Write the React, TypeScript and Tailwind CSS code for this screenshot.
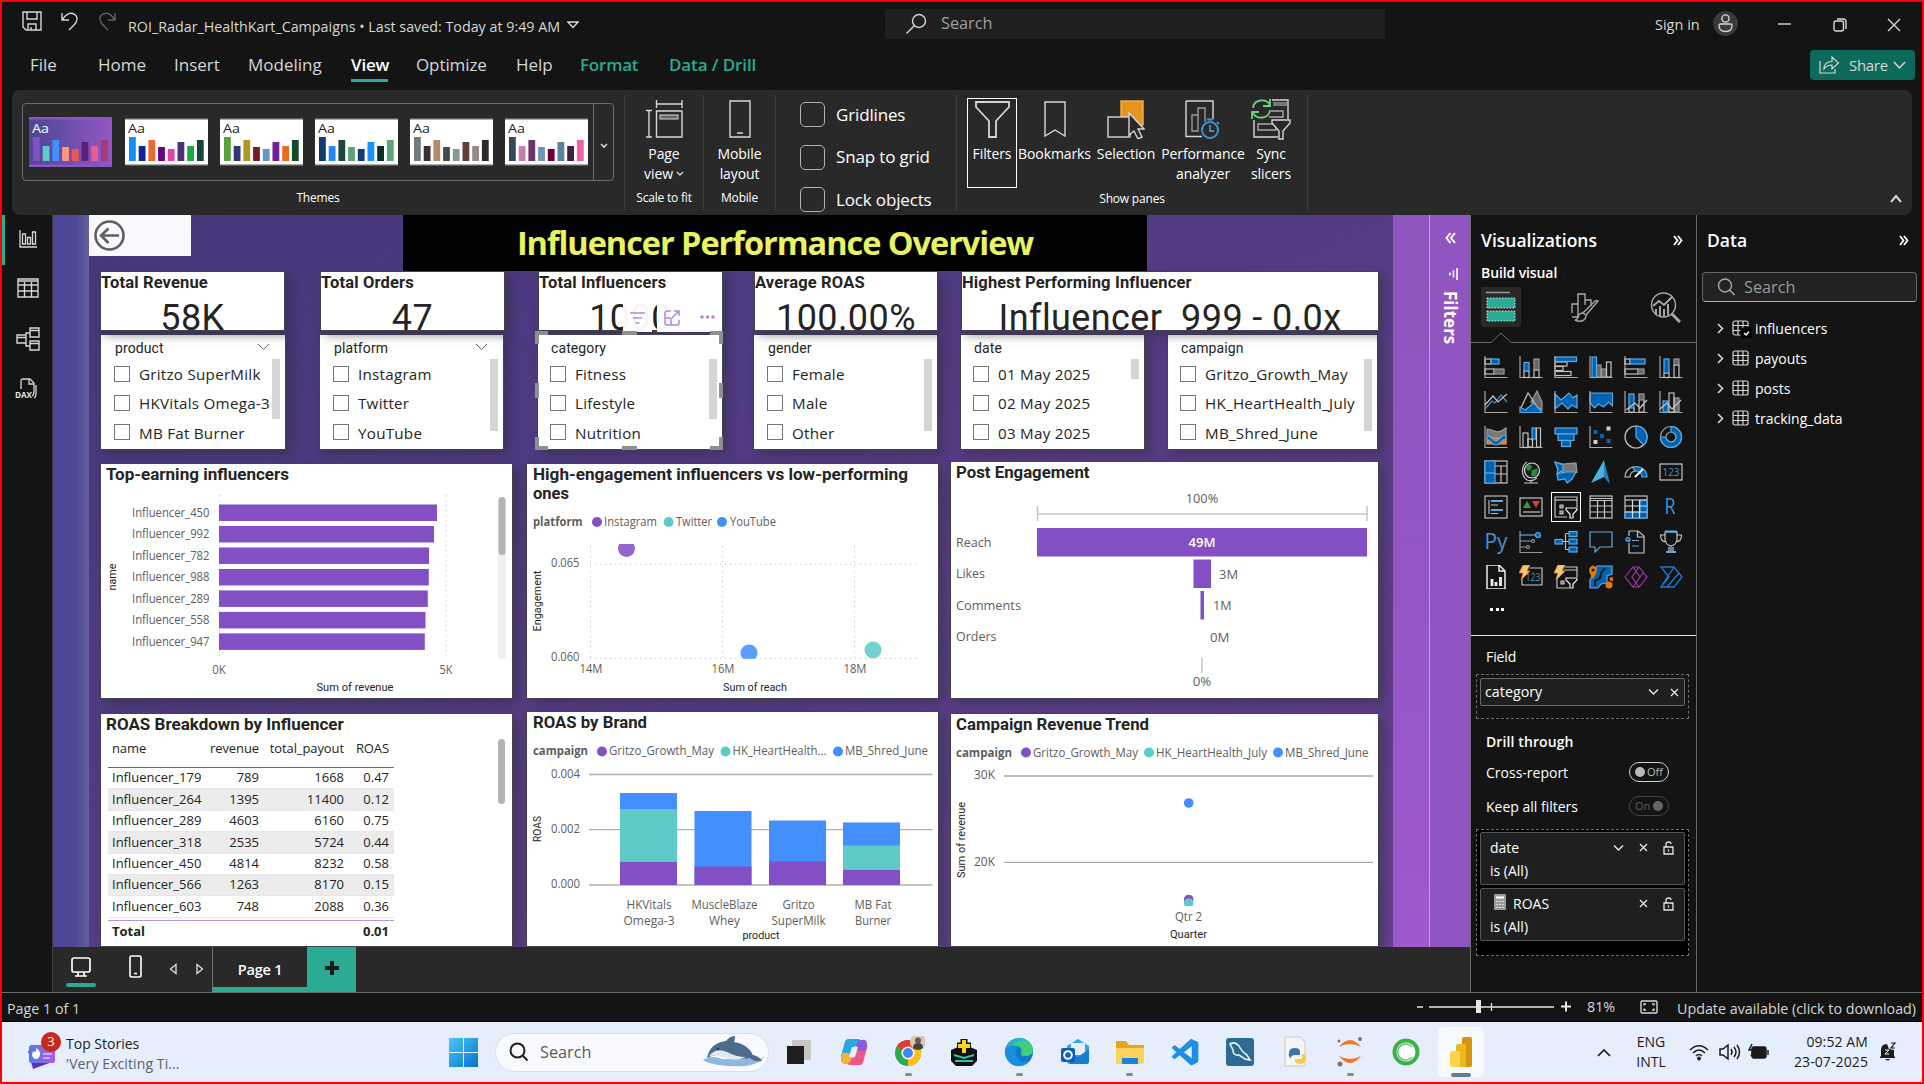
import React from "react";

const UI = "font-['Open_Sans','Noto_Sans',sans-serif]";
const DIN = "font-['Roboto','Liberation_Sans',sans-serif]";

/* ---------- svg helpers ---------- */

type TProps = {
  x: number;
  y: number;
  s?: number;
  w?: number;
  a?: "start" | "middle" | "end";
  c?: string;
  b?: number;
  din?: boolean;
  rot?: boolean;
  children: React.ReactNode;
};

function T({ x, y, s = 12, w, a = "start", c = "#605e5c", b = 400, din, rot, children }: TProps) {
  return (
    <text
      x={x}
      y={y + s * 0.33}
      fontSize={s}
      fontWeight={b}
      textAnchor={a}
      fill={c}
      stroke="none"
      textLength={w}
      lengthAdjust="spacingAndGlyphs"
      transform={rot ? `rotate(-90 ${x} ${y})` : undefined}
      className={din ? DIN : UI}
    >
      {children}
    </text>
  );
}

function Ico({ w, h, vb, children, className = "" }: { w: number; h: number; vb?: string; children: React.ReactNode; className?: string }) {
  return (
    <svg width={w} height={h} viewBox={vb ?? `0 0 ${w} ${h}`} fill="none" stroke="#d6d6d6" strokeWidth={1.4} className={"shrink-0 " + className}>
      {children}
    </svg>
  );
}

/* ---------- title bar ---------- */

function TitleBar() {
  return (
    <div className="flex h-[43px] items-center pl-[20px] text-[#d6d6d6]">
      <Ico w={20} h={20} className="-mt-1.5">
        <path d="M1 1h18v18H4l-3-3z M5 1v7h10V1 M6 19v-6h8v6 M9 19v-3" />
      </Ico>
      <Ico w={18} h={20} className="-mt-1.5 ml-[19px]">
        <path d="M1 2v7h7 M1.500 8.500C5 3 9 1 13 3c5 3 3 8 0 11l-5 5" />
      </Ico>
      <Ico w={18} h={20} className="-mt-1.5 ml-[19px] opacity-40">
        <path d="M17 2v7h-7 M16.500 8.500C13 3 9 1 5 3c-5 3-3 8 0 11l5 5" />
      </Ico>
      <span className="ml-[12px] mt-1.5 w-[439px] whitespace-nowrap text-[14.3px]">
        ROI_Radar_HealthKart_Campaigns • Last saved: Today at 9:49 AM
      </span>
      <Ico w={12} h={8} className="mt-0.5">
        <path d="M1 1h10L6 6.500z" />
      </Ico>
      <div className="ml-[306px] flex h-[30px] w-[500px] items-center rounded-[3px] bg-[#1f1f1f] pl-[20px]">
        <Ico w={22} h={22}>
          <circle cx="14" cy="8" r="6.500" />
          <path d="M9.500 12.500L1.500 20.500" />
        </Ico>
        <span className="ml-[14px] text-[16.300px] text-[#a0a0a0]">Search</span>
      </div>
      <span className="ml-[270px] mt-0.5 w-[58px] whitespace-nowrap text-[14.500px]">Sign in</span>
      <Ico w={25} h={25}>
        <circle cx="12.500" cy="12.500" r="12.500" fill="#3a3a3a" stroke="none" />
        <circle cx="12.500" cy="7.500" r="3.600" />
        <path d="M6 14.500c0-1 .5-1.500 1.500-1.500h10c1 0 1.500.5 1.500 1.500 0 4-2.500 6-6.500 6S6 18.500 6 14.500z" />
      </Ico>
      <Ico w={13} h={13} className="ml-[40px]">
        <path d="M0 7h13" />
      </Ico>
      <Ico w={14} h={14} className="ml-[42px] mt-0.5">
        <rect x="1" y="3" width="9.500" height="10" rx="2" />
        <path d="M4 1h6c2 0 3 1 3 3v7" />
      </Ico>
      <Ico w={14} h={14} className="ml-[40px] mt-0.5">
        <path d="M1 1l12 12M13 1L1 13" />
      </Ico>
    </div>
  );
}

function Menu() {
  return (
    <div className="flex h-[45px] items-start whitespace-nowrap pt-[7px] text-[17px] leading-[26px] text-[#d6d6d6]">
      <span className="ml-[28px] w-[68px]">File</span>
      <span className="w-[76px]">Home</span>
      <span className="w-[74px]">Insert</span>
      <span className="w-[103px]">Modeling</span>
      <span className="h-[30px] w-[37px] border-b-[3px] border-[#2bab94] font-semibold tracking-[-0.2px] text-white">View</span>
      <span className="ml-[28px] w-[100px] tracking-[-0.1px]">Optimize</span>
      <span className="w-[64px]">Help</span>
      <span className="w-[89px] font-semibold tracking-[-0.2px] text-[#2bab94]">Format</span>
      <span className="w-[88px] font-semibold tracking-[-0.1px] text-[#2bab94]">Data / Drill</span>
      <div className="ml-auto mr-[7px] mt-[-2px] flex h-[30px] w-[105px] items-center rounded-[4px] bg-[#0d695a] pl-[9px] text-[15px]">
        <Ico w={21} h={20}>
          <path d="M1 6v12h15v-4 M5 14c0-5 3-7.500 8-7.500V2l6.500 6-6.500 6V10c-4 0-6 1-8 4z" strokeWidth={1.2} />
        </Ico>
        <span className="ml-[9px] tracking-[-0.3px]">Share</span>
        <Ico w={13} h={9} className="ml-[5px]">
          <path d="M1 1l5.500 6L12 1" />
        </Ico>
      </div>
    </div>
  );
}

/* ---------- ribbon ---------- */

const themes: { colors: string[] }[] = [
  { colors: ["#8250c4", "#5ecbc8", "#438fff", "#ff977e", "#eb5757", "#5b2071", "#ec5a96", "#a43b76"] },
  { colors: ["#118dff", "#12239e", "#e66c37", "#6b007b", "#e044a7", "#4a3076", "#1aab40", "#15443c"] },
  { colors: ["#5aa33a", "#2f3b73", "#b09624", "#791b22", "#5e95cc", "#6c1f96", "#e66f1b", "#164a2c"] },
  { colors: ["#133a6b", "#2684ff", "#1d463f", "#5aa672", "#0f3d74", "#1c91ff", "#0c2e2a", "#5ca57b"] },
  { colors: ["#6e7a80", "#3a2f30", "#b38c6f", "#444b4f", "#8a9699", "#5f3f38", "#928c86", "#27292a"] },
  { colors: ["#36495c", "#c77ea8", "#6d346d", "#7095b5", "#6f0034", "#5d829b", "#42203d", "#ec62a4"] },
];
const barHeights = [24, 15, 21, 14, 12, 19, 15, 21];

function ThemeThumb({ i, colors }: { i: number; colors: string[] }) {
  return (
    <svg width="83" height="50" viewBox="0 0 83 50" className={i ? "shrink-0" : "mr-px shrink-0"}>
      <defs>
        <linearGradient id="thumb" x1="0" x2="1">
          <stop offset="0" stopColor="#4a4893" />
          <stop offset="1" stopColor="#9457c4" />
        </linearGradient>
      </defs>
      <rect width="83" height={i ? 48 : 50} y={i ? 1 : 0} fill={i ? "#5a5d60" : "#8a56c6"} />
      <rect width="83" height="45" y="2.500" fill={i ? "#ffffff" : "url(#thumb)"} />
      <T x={3} y={11.500} s={13} c={i ? "#1e1e1e" : "#fff"} w={17}>
        Aa
      </T>
      {colors.map((c, k) => (
        <rect key={k} x={4 + k * 9.7} width={6.800} y={44 - barHeights[k]} height={barHeights[k]} fill={c} />
      ))}
    </svg>
  );
}

function Label({ children, className = "" }: { children: React.ReactNode; className?: string }) {
  return <div className={"whitespace-nowrap text-center text-[12px] leading-[16px] tracking-[-0.2px] text-white " + className}>{children}</div>;
}

function Tool({ icon, lines, className = "" }: { icon: React.ReactNode; lines: React.ReactNode[]; className?: string }) {
  return (
    <div className={"flex shrink-0 flex-col items-center whitespace-nowrap text-[14px] leading-[20px] tracking-[-0.1px] text-white " + className}>
      <div className="mb-[5px] flex h-[40px] items-center">{icon}</div>
      {lines.map((l, i) => (
        <div key={i}>{l}</div>
      ))}
    </div>
  );
}

function Ribbon() {
  return (
    <div className="ml-[10px] flex h-[125px] w-[1900px] rounded-[8px] bg-[#292929] py-[5px]">
      <div className="w-[613px] border-r border-[#3d3d3d] pl-[10px] pt-[8px]">
        <div className="flex h-[78px] w-[592px] rounded-[4px] border border-[#6a6a6a]">
          <div className="flex w-[571px] items-center gap-[12px] border-r border-[#6a6a6a] pl-[6px]">
            {themes.map((t, i) => (
              <ThemeThumb key={i} i={i} colors={t.colors} />
            ))}
          </div>
          <div className="flex flex-1 items-center justify-center pt-2">
            <Ico w={8} h={6}>
              <path d="M1 1l3 3 3-3" strokeWidth={1.6} />
            </Ico>
          </div>
        </div>
        <Label className="mt-[9px] pr-[10px]">Themes</Label>
      </div>
      <div className="w-[79px] border-r border-[#3d3d3d] pt-[4px]">
        <Tool
          icon={
            <Ico w={37} h={38}>
              <path d="M10 4h26M10.500 0v8M36 0v8M3 11v26M0 10.500h6M0 37h6M10.500 11H36v26H10.500z" />
              <rect x="14" y="15" width="18" height="4" fill="#666" strokeWidth="1" />
            </Ico>
          }
          lines={[
            "Page",
            <span className="flex items-center gap-[3px]">
              view
              <Ico w={8} h={6}>
                <path d="M1 1l3 3 3-3" />
              </Ico>
            </span>,
          ]}
        />
        <Label className="mt-[6px]">Scale to fit</Label>
      </div>
      <div className="w-[72px] border-r border-[#3d3d3d] pt-[4px]">
        <Tool
          icon={
            <Ico w={22} h={38}>
              <path d="M1 1h20v36H1z M8 33h6" />
            </Ico>
          }
          lines={["Mobile", "layout"]}
        />
        <Label className="mt-[6px]">Mobile</Label>
      </div>
      <div className="flex w-[181px] flex-col gap-[17.500px] border-r border-[#3d3d3d] pl-[24px] pt-[7px]">
        {["Gridlines", "Snap to grid", "Lock objects"].map((t) => (
          <div key={t} className="flex h-[25px] shrink-0 items-center gap-[11px] whitespace-nowrap text-[17px] tracking-[-0.15px] text-white">
            <div className="h-[25px] w-[25px] rounded-[5px] border border-[#b0b0b0]" />
            {t}
          </div>
        ))}
      </div>
      <div className="w-[351px] border-r border-[#3d3d3d] pt-[3px]">
        <div className="flex h-[92px]">
          <Tool
            className="ml-[10px] h-[90px] w-[50px] border border-white"
            icon={
              <Ico w={35} h={37}>
                <path d="M1 1h33v5L21 20v16h-7V20L1 6z" strokeWidth={1.8} />
              </Ico>
            }
            lines={["Filters"]}
          />
          <Tool
            className="w-[75px] pt-px"
            icon={
              <Ico w={22} h={37}>
                <path d="M1 1h20v34l-10-6-10 6z" />
              </Ico>
            }
            lines={["Bookmarks"]}
          />
          <Tool
            className="w-[68px] pt-px"
            icon={
              <Ico w={38} h={39}>
                <rect x="14" y="1" width="22" height="24" fill="#e8951f" stroke="#f5b04a" />
                <rect x="1" y="17" width="22" height="20" fill="#292929" />
                <path d="M22 13v22l5-4 4 8 4-2-4-8h6z" fill="#292929" />
              </Ico>
            }
            lines={["Selection"]}
          />
          <Tool
            className="w-[86px] pt-px"
            icon={
              <Ico w={36} h={39}>
                <path d="M1 1h27v18M17 36.500H1V1" />
                <path d="M7 31V15h6v16z M13 31V8h7v14" stroke="#9a9a9a" />
                <circle cx="25" cy="30" r="8" stroke="#3f94d2" strokeWidth="2" />
                <path d="M25 25v6h4 M22 19.500h6 M32 22l2 2" stroke="#3f94d2" strokeWidth="1.800" />
              </Ico>
            }
            lines={["Performance", "analyzer"]}
          />
          <Tool
            className="w-[50px] pt-px"
            icon={
              <Ico w={40} h={41}>
                <path d="M21 1h16v19 M3 21v17h24" />
                <path d="M22 3h14v4H22z" fill="#777" stroke="none" />
                <path d="M20 12h12v6H18 M7 25h18v6H7z" stroke="#a8a8a8" />
                <path d="M21 21h18v3l-7 8v8h-4v-8l-7-8z" fill="#292929" />
                <path d="M2 9c1-9 13-10 17-3M19 0v7h-7M19 11c-1 9-13 10-17 3M1 20v-7h7" stroke="#6fcf7c" strokeWidth="1.800" />
              </Ico>
            }
            lines={["Sync", "slicers"]}
          />
        </div>
        <Label className="mt-px">Show panes</Label>
      </div>
      <div className="flex flex-1 items-end justify-end pb-[7px] pr-[10px]">
        <Ico w={12} h={9}>
          <path d="M1 8l5-6 5 6" strokeWidth={2} />
        </Ico>
      </div>
    </div>
  );
}

/* ---------- left nav ---------- */

function LeftNav() {
  return (
    <div className="flex w-[51px] flex-col border-r border-[#3f3f3f] bg-[#141414]">
      <div className="flex h-[50px] items-center border-l-[3px] border-[#2bab94] pb-[2px] pl-[14px]">
        <Ico w={18} h={18}>
          <path d="M1 0v17h17M3.500 14V4h3v10zM8.500 14V7.500h3V14zM13.500 14V2h3v12z" strokeWidth={1.300} />
        </Ico>
      </div>
      <Ico w={22} h={20} className="ml-[15px] mt-[13px]">
        <path d="M1 1h20v18H1zM1 3h20M1 7h20M1 13h20M7.500 4v15M14.500 4v15" />
      </Ico>
      <Ico w={24} h={24} className="ml-[14px] mt-[29px]">
        <path d="M1 8h9v8H1zM1 10.500h9M14 1h9v9h-9zM14 3.500h9M14 14h9v9h-9zM14 16.500h9M10 10V6h4M10 14v5h4" />
      </Ico>
      <svg width="24" height="24" viewBox="0 0 24 24" className="ml-[13px] mt-[27px]" fill="none" stroke="#d6d6d6" strokeWidth="1.300">
        <path d="M6 11V3q0-2 2-2h7l4 4v8q0 4-2 5M14 1v5h5M21 7v8q0 4-2 5" />
        <T x={0} y={17} s={8.500} w={17} c="#e6e6e6" b={700}>
          DAX
        </T>
      </svg>
    </div>
  );
}

/* ---------- report canvas ---------- */

const cardCls = "shrink-0 border border-[#45424f] bg-white shadow-[5px_5px_9px_rgba(45,45,50,0.45)]";

function Kpi({ title, value, className }: { title: string; value: string; className: string }) {
  return (
    <div className={`${cardCls} ${DIN} h-[60px] overflow-hidden text-[#252423] ${className}`}>
      <div className="whitespace-nowrap text-[16.500px] font-bold leading-[21px] tracking-[0.15px]">{title}</div>
      <div className="mt-[7px] whitespace-pre text-center text-[36px] leading-[36px] tracking-[0.4px]">{value}</div>
    </div>
  );
}

function Slicer({ title, items, className, thumb, chevron, left = "pl-[12px]" }: { title: string; items: string[]; className: string; thumb: string; chevron?: boolean; left?: string }) {
  return (
    <div className={`${cardCls} flex h-[116px] text-[#252423] ${left} ${className}`}>
      <div className="min-w-0 flex-1">
        <div className={`${DIN} flex h-[25px] items-center justify-between pt-[2px] pr-[1px] text-[14px] tracking-[0.1px]`}>
          <span className="ml-[1px]">{title}</span>
          {chevron && (
            <svg width="13" height="8" viewBox="0 0 13 8" fill="none" stroke="#666" className="-mt-[4px] mr-[1px]">
              <path d="M1 1l5.500 5.500L12 1" />
            </svg>
          )}
        </div>
        {items.map((t) => (
          <div key={t} className="flex h-[29.200px] items-center whitespace-nowrap text-[15.200px] tracking-[0.25px]">
            <div className="-mt-[2px] h-[16px] w-[16px] shrink-0 border border-[#777]" />
            <span className="ml-[9px]">{t}</span>
          </div>
        ))}
      </div>
      <div className={`mt-[24px] w-[8px] shrink-0 bg-[#d5d5d5] ${thumb}`} />
    </div>
  );
}

function SelectionFrame() {
  return (
    <svg width="188" height="119" viewBox="0 0 188 119" className="absolute -left-[2px] -top-[3px] z-30" fill="none" stroke="#8f8f8f" strokeWidth="4">
      <path d="M2 13V2h11M175 2h11v11M186 106v11h-11M13 117H2v-11" />
      <path d="M87 2h15M87 117h15M2 52v15M186 52v15" />
    </svg>
  );
}

function HoverTools() {
  return (
    <div className="absolute -top-[31px] right-[1px] z-30 flex h-[29px] w-[99px]">
      <svg width="99" height="29" viewBox="0 0 99 29" fill="none" stroke="#b08ad9" strokeWidth="1.500">
        <path d="M0 0h29v29H0zM34 0h65v29H34z" fill="#fff" fillOpacity=".96" stroke="none" />
        <path d="M7 10h15M10 15h9M12.500 20h4" />
        <path d="M48 8h-4q-2 0-2 2v10q0 2 2 2h10q2 0 2-2v-3M42 15h5q1 0 1 1v6M49 15l7-7M51 8h5v5" />
        <g fill="#b08ad9" stroke="none">
          <circle cx="79" cy="14" r="1.800" />
          <circle cx="84.500" cy="14" r="1.800" />
          <circle cx="90" cy="14" r="1.800" />
        </g>
      </svg>
    </div>
  );
}

function Dot({ x, y, c, r = 5 }: { x: number; y: number; c: string; r?: number }) {
  return <circle cx={x} cy={y} r={r} fill={c} />;
}

const P = "#8250c4";
const TE = "#5ecbc8";
const BL = "#438fff";
const INK = "#252423";

function TopEarning() {
  const rows: [string, number][] = [
    ["Influencer_450", 437],
    ["Influencer_992", 434],
    ["Influencer_782", 429],
    ["Influencer_988", 428.800],
    ["Influencer_289", 427.800],
    ["Influencer_558", 425.500],
    ["Influencer_947", 424.800],
  ];
  return (
    <svg width="411" height="234" viewBox="101 464 411 234">
      <T x={106} y={474.500} s={17} w={183} b={700} c={INK} din>Top-earning influencers</T>
      <path d="M219.500 495V660M446 495V660" stroke="#d0d0d0" strokeDasharray="1.500 3.500" />
      {rows.map(([n, e], i) => (
        <g key={n}>
          <T x={209.500} y={513 + i * 21.480} s={11.800} w={77.500} a="end">{n}</T>
          <rect x={219} y={504.500 + i * 21.480} width={e - 219} height={16.500} fill={P} />
        </g>
      ))}
      <T x={219} y={670} s={12} a="middle" w={13.500}>0K</T>
      <T x={446} y={670} s={12} a="middle" w={13}>5K</T>
      <T x={355} y={687.500} s={11} w={77} a="middle" c={INK} din>Sum of revenue</T>
      <T x={112} y={577} s={11} w={27} a="middle" c={INK} din rot>name</T>
      <rect x="498" y="497" width="8" height="162" rx="4" fill="#efefef" />
      <rect x="498.500" y="497" width="7" height="58" rx="3.500" fill="#b3b3b3" />
    </svg>
  );
}

function Scatter() {
  return (
    <svg width="411" height="234" viewBox="527 464 411 234">
      <T x={533} y={474.500} s={17} w={375} b={700} c={INK} din>High-engagement influencers vs low-performing</T>
      <T x={533} y={493.500} s={17} w={36} b={700} c={INK} din>ones</T>
      <T x={533} y={522.500} s={12} w={49.500} b={700}>platform</T>
      <Dot x={597} y={522} c={P} />
      <T x={604} y={522.500} s={12} w={53}>Instagram</T>
      <Dot x={668.600} y={522} c={TE} />
      <T x={676} y={522.500} s={12} w={36}>Twitter</T>
      <Dot x={722} y={522} c={BL} />
      <T x={730} y={522.500} s={12} w={46}>YouTube</T>
      <path d="M590.500 546V658M722.500 546V658M854.500 546V658M590 564.300H917M590 658.500H917" stroke="#c4c4c4" strokeDasharray="1.200 3.800" />
      <clipPath id="plot">
        <rect x="585" y="544" width="335" height="114.800" />
      </clipPath>
      <g clipPath="url(#plot)" opacity=".87">
        <Dot x={626.500} y={548.500} r={8.500} c={P} />
        <Dot x={749} y={653} r={8.500} c={BL} />
        <Dot x={873} y={650} r={8.500} c={TE} />
      </g>
      <T x={551} y={563.500} s={12} w={28.500}>0.065</T>
      <T x={551} y={657.500} s={12} w={28.500}>0.060</T>
      <T x={591} y={669.500} s={12} w={23} a="middle">14M</T>
      <T x={723} y={669.500} s={12} w={23} a="middle">16M</T>
      <T x={855} y={669.500} s={12} w={23} a="middle">18M</T>
      <T x={755} y={687.500} s={11} w={64} a="middle" c={INK} din>Sum of reach</T>
      <T x={537.500} y={601} s={11} w={61} a="middle" c={INK} din rot>Engagement</T>
    </svg>
  );
}

function Funnel() {
  return (
    <svg width="428" height="236" viewBox="951 462 428 236">
      <T x={956} y={472.500} s={17} w={133.500} b={700} c={INK} din>Post Engagement</T>
      <T x={1202} y={498.500} s={13} w={32.500} a="middle">100%</T>
      <path d="M1037 514H1367M1037.500 506v15M1367 506v15M1202 658v15" stroke="#c8c4c6" strokeWidth="1.500" />
      <g fill={P}>
        <rect x="1037" y="528" width="330" height="28.500" />
        <rect x="1193.500" y="559.500" width="17.500" height="28.500" />
        <rect x="1200.500" y="591" width="3.500" height="28.500" />
      </g>
      <T x={956} y={542.500} s={13} w={35.500}>Reach</T>
      <T x={956} y={573.500} s={13} w={29}>Likes</T>
      <T x={956} y={605.500} s={13} w={65}>Comments</T>
      <T x={956} y={636.500} s={13} w={40.500}>Orders</T>
      <T x={1202} y={543} s={13} w={27} a="middle" c="#fff" b={600}>49M</T>
      <T x={1219} y={574.500} s={13} w={19}>3M</T>
      <T x={1213} y={606} s={13} w={18.500}>1M</T>
      <T x={1210} y={638} s={13} w={19.500}>0M</T>
      <T x={1202} y={682} s={13} w={18.500} a="middle">0%</T>
    </svg>
  );
}

function RoasByBrand() {
  const bars: { x: number; seg: [number, string][] }[] = [
    { x: 620, seg: [[793, BL], [809, TE], [862, P]] },
    { x: 694.500, seg: [[811, BL], [866.500, P]] },
    { x: 769, seg: [[820.500, BL], [861.500, P]] },
    { x: 843, seg: [[822.500, BL], [845.500, TE], [870, P]] },
  ];
  const cats: [number, string, number, string, number][] = [
    [649, "HKVitals", 45, "Omega-3", 51],
    [724.500, "MuscleBlaze", 66, "Whey", 31],
    [798.500, "Gritzo", 32, "SuperMilk", 54],
    [873, "MB Fat", 37, "Burner", 36],
  ];
  return (
    <svg width="411" height="234" viewBox="527 712 411 234">
      <T x={533} y={722.500} s={17} w={114} b={700} c={INK} din>ROAS by Brand</T>
      <T x={533} y={751.500} s={12} w={55} b={700}>campaign</T>
      <Dot x={602} y={751.500} c={P} />
      <T x={609} y={751.500} s={12} w={105}>Gritzo_Growth_May</T>
      <Dot x={725.500} y={751.500} c={TE} />
      <T x={732.500} y={751.500} s={12} w={94}>HK_HeartHealth...</T>
      <Dot x={838} y={751.500} c={BL} />
      <T x={845} y={751.500} s={12} w={83}>MB_Shred_June</T>
      <path d="M589 774.500H932.500M589 829.700H932.500M589 885H932.500" stroke="#b0b0b0" strokeWidth="1.300" />
      <T x={551} y={774.500} s={12} w={29}>0.004</T>
      <T x={551} y={829.500} s={12} w={29}>0.002</T>
      <T x={551} y={884.500} s={12} w={29}>0.000</T>
      {bars.map((b) =>
        b.seg.map(([y, c]) => <rect key={b.x + c} x={b.x} y={y} width={57} height={885 - y} fill={c} />)
      )}
      {cats.map(([x, a, wa, b, wb]) => (
        <g key={a}>
          <T x={x} y={905} s={12} a="middle" w={wa}>{a}</T>
          <T x={x} y={921} s={12} a="middle" w={wb}>{b}</T>
        </g>
      ))}
      <T x={761} y={935.500} s={11} w={37} a="middle" c={INK} din>product</T>
      <T x={537.500} y={829} s={11} w={26} a="middle" c={INK} din rot>ROAS</T>
    </svg>
  );
}

function Trend() {
  return (
    <svg width="427" height="232" viewBox="951 714 427 232">
      <T x={956} y={724.500} s={17} w={193} b={700} c={INK} din>Campaign Revenue Trend</T>
      <T x={956} y={753} s={12} w={56} b={700}>campaign</T>
      <Dot x={1026} y={752.500} c={P} />
      <T x={1033} y={753} s={12} w={105}>Gritzo_Growth_May</T>
      <Dot x={1149} y={752.500} c={TE} />
      <T x={1156} y={753} s={12} w={111}>HK_HeartHealth_July</T>
      <Dot x={1278} y={752.500} c={BL} />
      <T x={1285} y={753} s={12} w={83.500}>MB_Shred_June</T>
      <path d="M1004 776H1373M1004 862.300H1373" stroke="#aaa" strokeWidth="1.300" />
      <T x={974} y={775.500} s={12} w={21}>30K</T>
      <T x={974} y={862.500} s={12} w={21}>20K</T>
      <Dot x={1188.700} y={803} r={4.800} c={BL} />
      <clipPath id="trend">
        <rect x="1180" y="880" width="20" height="26" />
      </clipPath>
      <g clipPath="url(#trend)">
        <Dot x={1188.700} y={899.500} r={4.800} c={P} />
        <Dot x={1188.700} y={903} r={4.800} c={TE} />
      </g>
      <T x={1188.500} y={917.500} s={12} w={27} a="middle">Qtr 2</T>
      <T x={1188.500} y={934.500} s={11} w={37} a="middle" c={INK} din>Quarter</T>
      <T x={961.500} y={840} s={11} w={76} a="middle" c={INK} din rot>Sum of revenue</T>
    </svg>
  );
}

const table: string[][] = [
  ["Influencer_179", "789", "1668", "0.47"],
  ["Influencer_264", "1395", "11400", "0.12"],
  ["Influencer_289", "4603", "6160", "0.75"],
  ["Influencer_318", "2535", "5724", "0.44"],
  ["Influencer_450", "4814", "8232", "0.58"],
  ["Influencer_566", "1263", "8170", "0.15"],
  ["Influencer_603", "748", "2088", "0.36"],
];
const cols = "grid grid-cols-[97px_50px_85px_45px] items-center pl-[4px] text-right";

function RoasTable() {
  return (
    <div className="flex h-full pl-[5px] text-[13px] text-[#252423]">
      <div className="w-[288px] pl-[2px]">
        <div className={`${DIN} -ml-[2px] h-[22px] whitespace-nowrap text-[17px] font-bold leading-[21px]`}>
          ROAS Breakdown by Influencer
        </div>
        <div className={`${cols} h-[32px] border-b border-[#8250c4] pb-[5px] tracking-[-0.1px]`}>
          <span className="text-left">name</span>
          <span>revenue</span>
          <span>total_payout</span>
          <span>ROAS</span>
        </div>
        {table.map((r, i) => (
          <div key={r[0]} className={`${cols} h-[21.400px] border-b border-[#e6e6e6] ${i % 2 ? "bg-[#ececec]" : ""}`}>
            {r.map((c, k) => (
              <span key={k} className={k === 0 ? "text-left" : ""}>
                {c}
              </span>
            ))}
          </div>
        ))}
        <div className={`${cols} mt-[2px] h-[24px] border-t border-[#b795e0] font-bold`}>
          <span className="text-left">Total</span>
          <span />
          <span />
          <span>0.01</span>
        </div>
      </div>
      <div className="ml-[104px] mt-[25px] h-[65px] w-[7px] rounded-full bg-[#b3b3b3]" />
    </div>
  );
}

function Report() {
  return (
    <div className="h-[732px] w-[1304px] overflow-hidden bg-linear-to-br from-[#45377a] to-[#64408f]">
      <div className="flex h-[56px]">
        <div className="h-[41px] w-[102px] bg-[#f9f8fc] pl-[5px] pt-[5px]">
          <svg width="31" height="31" viewBox="0 0 31 31" fill="none" stroke="#5f5f5f" strokeWidth="2.600">
            <circle cx="15.500" cy="15.500" r="14" />
            <path d="M25 15.500H8M14.500 8.500l-7.500 7 7.500 7.500" />
          </svg>
        </div>
        <div className="ml-[212px] flex w-[744px] items-center justify-center whitespace-nowrap bg-[#020203] text-[32.500px] font-bold tracking-[-1.040px] text-[#e8f363]">
          Influencer Performance Overview
        </div>
      </div>
      <div className="relative z-10 flex">
        <Kpi className="ml-[11px] w-[185px]" title="Total Revenue" value="58K" />
        <Kpi className="ml-[35px] w-[185px]" title="Total Orders" value="47" />
        <Kpi className="ml-[33px] w-[185px]" title="Total Influencers" value="1000" />
        <Kpi className="ml-[31px] w-[184px]" title="Average ROAS" value="100.00%" />
        <Kpi className="ml-[23px] w-[418px]" title="Highest Performing Influencer" value="Influencer  999 - 0.0x" />
      </div>
      <div className="mt-[3px] flex">
        <Slicer className="ml-[11px] w-[186px] pr-[5px]" left="pl-[13px]" title="product" chevron thumb="h-[60px]" items={["Gritzo SuperMilk", "HKVitals Omega-3", "MB Fat Burner"]} />
        <Slicer className="ml-[33px] w-[185px] pr-[5px]" left="pl-[13px]" title="platform" chevron thumb="h-[72px]" items={["Instagram", "Twitter", "YouTube"]} />
        <div className="relative z-20 ml-[33px]">
          <Slicer className="w-[186px] pr-[5px]" title="category" thumb="h-[60px]" items={["Fitness", "Lifestyle", "Nutrition"]} />
          <HoverTools />
          <SelectionFrame />
        </div>
        <Slicer className="ml-[30px] w-[185px] pr-[5px]" left="pl-[13px]" title="gender" thumb="h-[72px]" items={["Female", "Male", "Other"]} />
        <Slicer className="ml-[22px] w-[185px] pr-[5px]" title="date" thumb="h-[20px]" items={["01 May 2025", "02 May 2025", "03 May 2025"]} />
        <Slicer className="ml-[22px] w-[211px] pr-[5px]" title="campaign" thumb="h-[72px]" items={["Gritzo_Growth_May", "HK_HeartHealth_July", "MB_Shred_June"]} />
      </div>
      <div className="mt-[13px] flex items-end">
        <div className={`${cardCls} ml-[11px] h-[236px] w-[413px]`}>
          <TopEarning />
        </div>
        <div className={`${cardCls} ml-[13px] h-[236px] w-[413px]`}>
          <Scatter />
        </div>
        <div className={`${cardCls} -mt-[2px] ml-[11px] h-[238px] w-[429px] overflow-hidden`}>
          <Funnel />
        </div>
      </div>
      <div className="mt-[14px] flex items-end">
        <div className={`${cardCls} ml-[11px] h-[234px] w-[413px]`}>
          <RoasTable />
        </div>
        <div className={`${cardCls} -mt-[2px] ml-[13px] h-[236px] w-[413px]`}>
          <RoasByBrand />
        </div>
        <div className={`${cardCls} ml-[11px] h-[234px] w-[429px]`}>
          <Trend />
        </div>
      </div>
    </div>
  );
}

function PageTabs() {
  return (
    <div className="flex h-[45px] items-center bg-[#292929]">
      <div className="ml-[13px] flex h-full w-[30px] flex-col items-center pt-[10px]">
        <Ico w={20} h={20}>
          <path d="M3 1h14q2 0 2 2v10q0 2-2 2H3q-2 0-2-2V3q0-2 2-2zM7 15.500v3M13 15.500v3M4 19h12" stroke="#fff" strokeWidth={1.700} />
        </Ico>
        <div className="mt-[6px] h-[4px] w-[30px] rounded-full bg-[#2bab94]" />
      </div>
      <Ico w={13} h={23} className="-mt-[6px] ml-[33px]">
        <path d="M2.500 1h8q1.500 0 1.500 1.500v18q0 1.500-1.500 1.500h-8Q1 22 1 20.500v-18Q1 1 2.500 1zM5 18.500h3" stroke="#fff" strokeWidth={1.600} />
      </Ico>
      <Ico w={8} h={12} className="-mt-[2px] ml-[27px]">
        <path d="M7 1.500v9L1.500 6z" />
      </Ico>
      <Ico w={8} h={12} className="-mt-[2px] ml-[19px]">
        <path d="M1 1.500v9L6.500 6z" />
      </Ico>
      <div className="ml-[8px] flex h-full w-[95px] items-center justify-center border-b-[5px] border-l border-b-[#2bab94] border-l-[#777] pt-[6px] text-[14.500px] font-semibold tracking-[-0.2px] text-white">
        Page 1
      </div>
      <div className="flex h-full w-[49px] items-center justify-center bg-[#2bab94] pb-[4px]">
        <svg width="14" height="14" viewBox="0 0 14 14" stroke="#1c1c1c" strokeWidth="4">
          <path d="M7 0v14M0 7h14" />
        </svg>
      </div>
    </div>
  );
}

function FiltersRail() {
  return (
    <div className="flex h-[732px] w-[41px] flex-col items-center border-l border-[#b9a9cb] bg-[#9155c1] pt-[17px] text-white">
      <svg width="11" height="12" viewBox="0 0 11 12" fill="none" stroke="#fff" strokeWidth="2">
        <path d="M5.500 1L1.500 6l4 5M10 1L6 6l4 5" />
      </svg>
      <svg width="10" height="12" viewBox="0 0 10 12" stroke="#fff" strokeWidth="1.600" className="ml-[6px] mt-[24px]">
        <path d="M9 0v12M5.500 2.500v7M2 4.500v3" />
      </svg>
      <span className="mt-[11px] text-[17px] font-bold leading-[20px] [writing-mode:vertical-rl]">Filters</span>
    </div>
  );
}

/* ---------- visualizations pane ---------- */

const bf = { fill: "#0063b1", stroke: "#5fa8e0" };
const gf = { fill: "#666", stroke: "#9a9a9a" };
const Axis = () => <path d="M1 1v21.500h22.500" stroke="#a6a6a6" />;

const vizIcons: React.ReactNode[] = [
  <><Axis /><rect x="1" y="4" width="6" height="5" /><rect x="7" y="4" width="8" height="5" {...bf} /><rect x="1" y="14" width="9" height="5" /><rect x="10" y="14" width="10" height="5" {...gf} /></>,
  <><Axis /><rect x="5" y="16" width="5" height="6.500" /><rect x="5" y="7.500" width="5" height="8.500" {...bf} /><rect x="15" y="15" width="5" height="7.500" /><rect x="15" y="4" width="5" height="11" {...gf} /></>,
  <><rect x="1" y="7" width="12" height="4" /><rect x="1" y="11.500" width="8" height="4" /><rect x="1" y="16.500" width="16" height="4" /><rect x="1" y="2" width="21.500" height="4.500" {...bf} /><Axis /></>,
  <><rect x="7" y="10" width="5" height="12" {...gf} /><rect x="12.500" y="14" width="5" height="8" {...gf} /><rect x="17.500" y="7" width="4.500" height="15" /><rect x="3" y="2" width="4.500" height="20.500" {...bf} /><Axis /></>,
  <><Axis /><rect x="1" y="4" width="5" height="5" /><rect x="6" y="4" width="15" height="5" {...bf} /><rect x="1" y="14" width="13" height="5" /><rect x="14" y="14" width="6" height="5" {...gf} /></>,
  <><Axis /><rect x="5" y="18" width="5" height="4.500" /><rect x="5" y="4" width="5" height="14" {...bf} /><rect x="15" y="10" width="5" height="12.500" /><rect x="15" y="4" width="5" height="6" {...gf} /></>,

  <><Axis /><path d="M1 19l7-8 3 2 6-8 6 7" stroke="#3f94d2" /><path d="M1 15l8-9 5 6 9-8" /></>,
  <><path d="M12 12l6-11 5 11v8z" {...gf} /><path d="M1 20L9 3l8 12" /><path d="M1 22.500V17l5 3 9-7 8 9.500z" {...bf} /></>,
  <><path d="M1 4l6 6 8-7 4 5 4-3v13l-5-3-4 4-6-6-7 6z" {...bf} /><Axis /></>,
  <><path d="M1 3h22.500v13l-4-4-5 5-5-3-4 4-4.500-5z" {...bf} /><Axis /></>,
  <><Axis /><rect x="5" y="4" width="5" height="14" {...bf} /><rect x="15" y="4" width="5" height="6" {...gf} /><path d="M5 18v4h5v-4M15 10v12h5V10M2 20l9-7 5 5 7-8" /></>,
  <><Axis /><rect x="4" y="11" width="5" height="11" {...bf} /><rect x="15" y="8" width="5" height="14" {...gf} /><rect x="10" y="3" width="5" height="19" /><path d="M1 19l7-6 5 6 9-9" /></>,

  <><path d="M3 4c8 0 7 7 19-1v8c-8 3-10 5-19-1z" fill="#777" stroke="#9a9a9a" /><path d="M3 13h19v6H3z" fill="#e8760a" stroke="#f2a04c" /><path d="M3 11c6 0 5 5 9 5s4-6 10-6v4c-5 0-5 6-10 6s-5-6-9-5z" {...bf} /><Axis /></>,
  <><Axis /><rect x="4" y="8" width="5" height="14.500" /><rect x="9" y="14" width="4.500" height="8" /><rect x="13" y="3" width="4" height="11" {...bf} /><path d="M13.500 14v8M17.500 3h4v19h-4z" /></>,
  <><rect x="1" y="3" width="22" height="6" {...bf} /><rect x="4" y="9" width="16" height="6.500" {...bf} /><rect x="7.500" y="15.500" width="9" height="6" {...bf} /></>,
  <><Axis /><g stroke="none"><rect x="4.500" y="5" width="4" height="4" fill="#0063b1" /><rect x="17.500" y="1.500" width="4" height="4" fill="#ccc" /><rect x="11" y="9" width="4" height="4" fill="#0063b1" /><rect x="17.500" y="14" width="4" height="4" fill="#0063b1" /><rect x="4.500" y="15" width="4" height="4" fill="#ccc" /></g></>,
  <><circle cx="12" cy="12" r="11" /><path d="M12 1a11 11 0 0 1 7.500 19L12 12z" {...bf} /></>,
  <><circle cx="12" cy="12" r="10.500" stroke="#9a9a9a" /><circle cx="12" cy="12" r="5" stroke="#9a9a9a" /><path d="M12 1.500A10.500 10.500 0 1 1 1.500 12H7a5 5 0 1 0 5-5z" {...bf} /></>,

  <><rect x="1" y="1" width="22" height="22" /><path d="M1 1h10v22H1z" {...bf} /><path d="M1 13h10" stroke="#5fa8e0" /><path d="M11 6h12M17 6v17M11 14h12" /></>,
  <><circle cx="13" cy="10.500" r="7.500" fill="#1a1a1a" stroke="#ddd" /><path d="M8 6c3-2 5 0 4 2s-2 3-4 1zM13 11l5-2-1 6-4 1z" fill="#2c8c3c" stroke="#2c8c3c" /><path d="M8 2C2 6 2 16 8 20q5 2 10-2M12 21v2M5 23h14" /></>,
  <><path d="M1 2l8 2 13-1 1 9-7 3-7-2-5-3z" fill="#777" stroke="#9a9a9a" /><path d="M1 2l8 3v5l-6 4 1-5z" {...bf} /><path d="M12 12l10 0-4 7-5 4-2-4-7 1-1-6z" {...bf} /></>,
  <><path d="M15 0L2 23l13-6z" fill="#4ab3dd" stroke="none" /><path d="M15 0l6 24-6-7z" fill="#2482c4" stroke="none" /></>,
  <><path d="M1 17a11 10 0 0 1 8-10l2 4a6 6 0 0 0-5 6z" /><path d="M9 7a11 10 0 0 1 14 10h-5a6 6 0 0 0-7-6z" {...bf} /><path d="M11 17l8-8" stroke="#eee" strokeWidth="2" /></>,
  <><rect x="1" y="4" width="22" height="16" /><T x={12} y={12} s={11} w={17} a="middle" c="#3f94d2">123</T></>,

  <><rect x="1" y="1" width="22" height="22" stroke="#bbb" /><path d="M5 5v14" stroke="#bbb" /><path d="M7 6h12M7 15h12" stroke="#5fa8e0" strokeWidth="1.800" /><path d="M7 10h7M7 18.500h7" /></>,
  <><rect x="1" y="3" width="22" height="18" /><path d="M4 13l4-7 4 7z" fill="#3a9b46" stroke="none" /><path d="M13 6h8l-4 7z" fill="#d93a3a" stroke="none" /><path d="M4 17h17" /></>,
  <><path d="M13 22H1V2h22v10" /><path d="M1 5h22" /><path d="M6 10h3v3H6zM6 16h3v3H6z" fill="#777" /><path d="M12 13h11v2l-4 4v4h-3v-4l-4-4z" stroke="#eee" /></>,
  <><rect x="1" y="1" width="22" height="22" /><path d="M1 3.500h22M1 5.500h22M1 11h22M1 17h22M8.500 5v18M15.500 5v18" /></>,
  <><rect x="1" y="1" width="22" height="22" /><path d="M16 5h7v18H1v-6h15z" {...bf} /><path d="M1 5h22M1 11h22M1 17h22M8.500 5v18M15.500 5v18" stroke="#cfe0ee" /></>,
  <T x={11} y={12} s={22} w={11} a="middle" c="#3f94d2">R</T>,

  <T x={12} y={11.500} s={22} w={23} a="middle" c="#3f94d2">Py</T>,
  <><path d="M1 1v21.500h22.500" stroke="#999" /><path d="M1 5h16" stroke="#5fa8e0" /><circle cx="19" cy="5" r="2.500" {...bf} /><path d="M1 11h11M1 17h6" stroke="#999" /><circle cx="14" cy="11" r="1.500" stroke="#999" /><circle cx="9" cy="17" r="1.500" stroke="#999" /></>,
  <><path d="M8 11.500h7M11.500 3.500v16M11.500 3.500H15M11.500 19.500H15" stroke="#bbb" /><g {...bf}><rect x="1" y="9.500" width="7.500" height="4.500" /><rect x="15" y="1.500" width="8" height="5" /><rect x="15" y="9" width="8" height="5" /><rect x="15" y="17" width="8" height="5" /></g></>,
  <path d="M1 2h22v15H11l-5 5v-5H1z" stroke="#5fa8e0" />,
  <><path d="M5 6V1h9l6 5v17H5V13M13.500 1v6H20" /><circle cx="4" cy="9.500" r="2" {...bf} /><path d="M8 10.500h7M8 16h7" stroke="#5fa8e0" /></>,
  <><path d="M6 2v8q1 5 6 6 5-1 6-6V2zM6 5H1.500q0 7 6 7M18 5h4.500q0 7-6 7M12 16v5M10 17v4M14 17v4" /><path d="M6 1.500h12M7 22h10" stroke="#5fa8e0" strokeWidth="2" /></>,

  <><path d="M3 0h12l6 6v18H3zM15 0v6h6" stroke="#eee" strokeWidth="1.500" /><path d="M8 14v7M12 17v4M16.500 12v9" stroke="#eee" strokeWidth="2.800" /></>,
  <><path d="M11 3h12v17H3V14" /><path d="M4 0h7L8 6h3l-9 9 2-7H0z" fill="#f5c679" stroke="#e8760a" strokeWidth=".8" /><T x={14} y={12} s={11} w={15} a="middle" c="#3f94d2">123</T></>,
  <><path d="M11 2h12v10M3 14v9h12M10 5h13" /><path d="M7 16h3v3H7z" fill="#777" /><path d="M12 13h11v2l-4 4v4h-3v-4l-4-4z" stroke="#eee" /><path d="M4 0h7L8 6h3l-9 9 2-7H0z" fill="#f5c679" stroke="#e8a03a" strokeWidth=".8" /></>,
  <><path d="M8 1h15v8l-5 2v7l-6 1-3 4H1V15z" {...bf} /><path d="M16 3l-4 5-1 5-5 3v5" stroke="#141414" strokeWidth="2" /><path d="M4 14Q-1 6 .5 3 4-2 7.500 3 9 6 4 14z" fill="#e8760a" stroke="none" /><circle cx="4" cy="5" r="1.500" fill="#141414" stroke="none" /><circle cx="20" cy="20" r="3.500" fill="#e8760a" stroke="none" /><circle cx="22.500" cy="14" r="2" fill="#e8760a" stroke="none" /></>,
  <path d="M1 12l8-10h6l8 10-8 10H9zM9 2l7 10-7 10M15 2L8 12l7 10M16 12l4-5" stroke="#a238a8" strokeWidth="1.200" />,
  <path d="M2 2h13l8 10-8 10H2l8-10zM2 22L15 2M8 22L20 8M10 12L5 6" stroke="#1b7ad6" strokeWidth="1.300" />,
];

function Chevrons() {
  return (
    <svg width="10" height="11" viewBox="0 0 10 11" fill="none" stroke="#fff" strokeWidth="1.800">
      <path d="M1 1l3.500 4.500L1 10M5 1l3.500 4.500L5 10" />
    </svg>
  );
}

const Down = ({ className = "" }: { className?: string }) => (
  <svg width="11" height="8" viewBox="0 0 11 8" fill="none" stroke="#e6e6e6" strokeWidth="1.500" className={className}>
    <path d="M1 1.500l4.500 4.500L10 1.500" />
  </svg>
);
const Cross = ({ className = "" }: { className?: string }) => (
  <svg width="9" height="9" viewBox="0 0 9 9" fill="none" stroke="#e6e6e6" strokeWidth="1.300" className={className}>
    <path d="M1 1l7 7M8 1L1 8" />
  </svg>
);
const Lock = ({ className = "" }: { className?: string }) => (
  <svg width="11" height="14" viewBox="0 0 11 14" fill="none" stroke="#e6e6e6" strokeWidth="1.300" className={className}>
    <path d="M1 6h9v7H1zM3 6V3q0-2 2.500-2Q8 1 8 3M5.500 8.500v2" />
  </svg>
);

function VizPane() {
  return (
    <div className="flex w-[227px] flex-col border-x border-[#6b6b6b] text-white">
      <div className="mt-[10px] flex h-[30px] items-center justify-between pl-[10px] pr-[13px] text-[17.500px] font-semibold">
        <span>Visualizations</span>
        <Chevrons />
      </div>
      <div className="mt-[8px] pl-[10px] text-[14px] font-semibold leading-[20px] tracking-[-0.1px]">Build visual</div>
      <div className="mt-[4px] flex h-[40px] items-center pl-[10px]">
        <div className="flex h-[40px] w-[40px] items-center justify-center rounded-[2px] bg-[#292929]">
          <svg width="30" height="32" viewBox="0 0 30 32" fill="none">
            <path d="M0 1.500h24" stroke="#999" strokeWidth="1.500" />
            <rect x="1" y="7" width="28" height="10" fill="#2bab94" stroke="#e0e0e0" strokeDasharray="1.500 1.500" />
            <rect x="1" y="20" width="28" height="10" fill="#2bab94" stroke="#e0e0e0" strokeDasharray="1.500 1.500" />
          </svg>
        </div>
        <Ico w={28} h={30} className="ml-[50px]">
          <path d="M1 21V12h6v13H1M7 23V2h7v11M14 8h6v6" stroke="#a6a6a6" />
          <path d="M27 9L15 23l-3-2L24 9q2-1 3 0zM12 21q-4 0-5 4-1 3-3 3 6 3 10-1 1-2 1-4" stroke="#a6a6a6" />
        </Ico>
        <Ico w={31} h={31} className="ml-[51px]">
          <circle cx="13.500" cy="13" r="12" stroke="#a6a6a6" />
          <path d="M3 14l6-5 5 4 8-8M6 23v-6M10 24V14M14 24v-7M18 23V12" stroke="#a6a6a6" strokeWidth="2" />
          <path d="M22 22l8 8" stroke="#a6a6a6" strokeWidth="3" />
        </Ico>
      </div>
      <svg width="225" height="11" viewBox="0 0 225 11" fill="none" stroke="#6b6b6b" className="mt-[5px]">
        <path d="M0 10.500h20l10-9.500 10 9.500h185" />
      </svg>
      <div className="mt-[6px] grid grid-cols-[repeat(6,35px)] auto-rows-[35px] pl-[7px]">
        {vizIcons.map((ic, i) => (
          <div key={i} className="flex items-center justify-center">
            <div className={i === 26 ? "flex h-[30px] w-[30px] items-center justify-center border border-white" : "flex"}>
              <svg width="24" height="24" viewBox="0 0 24 24" fill="none" stroke="#c4c4c4" strokeWidth="1.200">
                {ic}
              </svg>
            </div>
          </div>
        ))}
      </div>
      <div className="flex h-[42px] shrink-0 items-start gap-[2.500px] border-b border-[#e6e6e6] pl-[19px] pt-[14px]">
        <div className="h-[3px] w-[3px] bg-white" />
        <div className="h-[3px] w-[3px] bg-white" />
        <div className="h-[3px] w-[3px] bg-white" />
      </div>
      <div className="mt-[11px] pl-[15px] text-[14px] leading-[20px] tracking-[-0.1px]">Field</div>
      <div className="ml-[5px] mt-[7px] h-[45px] w-[213px] border border-dashed border-[#6b6b6b] p-[3px]">
        <div className="flex h-[28px] items-center rounded-[2px] border border-[#6b6b6b] bg-[#1f1f1f] pl-[4px] pr-[5px] text-[14.300px]">
          category
          <Down className="ml-auto mr-[11px]" />
          <Cross />
        </div>
      </div>
      <div className="mt-[13px] pl-[15px] text-[14px] font-semibold leading-[20px] tracking-[0.1px]">Drill through</div>
      <div className="mt-[9px] flex h-[22px] items-center justify-between pl-[15px] pr-[27px] text-[14px]">
        Cross-report
        <div className="flex h-[20px] w-[40px] items-center gap-[2px] rounded-full border border-[#d0d0d0] pl-[5px] text-[11px] text-[#b8b8b8]">
          <div className="h-[10px] w-[10px] rounded-full bg-[#b8b8b8]" />
          Off
        </div>
      </div>
      <div className="mt-[12px] flex h-[22px] items-center justify-between pl-[15px] pr-[27px] text-[14px]">
        Keep all filters
        <div className="flex h-[20px] w-[40px] items-center gap-[3px] rounded-full border border-[#444] pl-[5px] text-[11px] text-[#5f5f5f]">
          On
          <div className="h-[10px] w-[10px] rounded-full bg-[#666]" />
        </div>
      </div>
      <div className="ml-[5px] mt-[12px] flex h-[127px] w-[213px] flex-col gap-[3px] border border-dashed border-[#6b6b6b] bg-black px-[3px] pt-[2px] text-[14px] leading-[23px]">
        <div className="h-[53px] rounded-[2px] border border-[#555] bg-[#1f1f1f] pl-[9px] pt-[3px]">
          <div className="flex items-center pr-[10px]">
            date
            <Down className="ml-auto" />
            <Cross className="ml-[15px]" />
            <Lock className="ml-[15px]" />
          </div>
          <div>is (All)</div>
        </div>
        <div className="h-[53px] rounded-[2px] border border-[#555] bg-[#1f1f1f] pl-[9px] pt-[3px]">
          <div className="flex items-center pr-[10px]">
            <svg width="12" height="16" viewBox="0 0 12 16" className="-mt-[3px] ml-[4px] mr-[7px]">
              <rect width="12" height="16" rx="1" fill="#9a9a9a" />
              <path d="M2 3.500h8" stroke="#fff" strokeWidth="2" />
              <path d="M2 7.500h8M2 10.500h8M2 13.500h8" stroke="#ddd" strokeDasharray="2 1" />
            </svg>
            ROAS
            <Cross className="ml-auto" />
            <Lock className="ml-[15px]" />
          </div>
          <div>is (All)</div>
        </div>
      </div>
    </div>
  );
}

function DataPane() {
  return (
    <div className="flex flex-1 flex-col text-white">
      <div className="mt-[10px] flex h-[30px] items-center justify-between pl-[10px] pr-[13px] text-[17.500px] font-semibold">
        Data
        <Chevrons />
      </div>
      <div className="ml-[5px] mt-[17px] flex h-[30px] w-[215px] items-center rounded-[4px] border border-[#666] border-b-[#b0b0b0] bg-[#222] pl-[14px] text-[16.300px] text-[#9a9a9a]">
        <Ico w={18} h={18}>
          <circle cx="8" cy="7.500" r="6.500" stroke="#aaa" />
          <path d="M12.500 12l5 5" stroke="#aaa" />
        </Ico>
        <span className="ml-[9px]">Search</span>
      </div>
      <div className="mt-[11px] text-[14px]">
        {["influencers", "payouts", "posts", "tracking_data"].map((t, i) => (
          <div key={t} className="flex h-[30px] items-center pl-[20px]">
            <Ico w={7} h={11}>
              <path d="M1 1l4.500 4.500L1 10" strokeWidth={1.600} />
            </Ico>
            <svg width="20" height="20" viewBox="0 0 20 20" fill="none" stroke="#d6d6d6" strokeWidth="1.200" className="ml-[8px]">
              <rect x="1" y="3" width="15" height="14" rx="2" />
              <path d="M1 7.500h15M1 12.500h15M6 3v14M11 3v14" />
              {i === 0 && (
                <>
                  <circle cx="14.500" cy="15" r="6.500" fill="#000" stroke="none" />
                  <path d="M12 15l2 2 3-3.500" stroke="#fff" strokeWidth="1.500" />
                </>
              )}
            </svg>
            <span className="ml-[3px]">{t}</span>
          </div>
        ))}
      </div>
    </div>
  );
}

/* ---------- status + taskbar ---------- */

function StatusBar() {
  return (
    <div className="flex h-[30px] items-center border-b border-t border-b-black border-t-[#6b6b6b] pl-[5px] text-[14.300px] text-[#d6d6d6]">
      <span className="mt-1">Page 1 of 1</span>
      <svg width="158" height="14" viewBox="1415 1001 158 14" className="ml-auto" stroke="#e6e6e6" strokeWidth="1.300" fill="none">
        <path d="M1417 1008h6M1429 1008h125M1491.500 1004v8" />
        <path d="M1561 1007.500h10M1566 1002.500v10" strokeWidth="2" />
        <rect x="1476" y="1001" width="5" height="13" fill="#e6e6e6" stroke="none" />
      </svg>
      <span className="ml-[14px] w-[53px]">81%</span>
      <Ico w={18} h={14}>
        <rect x="1" y="1" width="16" height="12" rx="1" />
        <path d="M4 5.500V4h2M14 5.500V4h-2M4 8.500V10h2M14 8.500V10h-2" />
      </Ico>
      <span className="ml-[19px] mr-[5px] mt-1 w-[240px] whitespace-nowrap">Update available (click to download)</span>
    </div>
  );
}

const taskIcons: React.ReactNode[] = [
  <><rect x="9" y="4" width="19" height="20" fill="#c6c6c6" /><rect x="4" y="10" width="17" height="18" fill="#1f1f1f" /></>,
  <><path d="M10 3h10q3 0 4 4l1 3h-8l-4 13q-1 5-5 5-6 0-5-8l3-11Q7 3 10 3z" fill="#29a8e0" /><path d="M22 29H12q-3 0-4-4l-1-3h8l4-13q1-5 5-5 6 0 5 8l-3 11q-1 6-4 6z" fill="#e8588a" /><path d="M4 17l-1 5q0 6 5 6 4 0 5-5l1-4q-5-3-10-2z" fill="#f2b33d" /><path d="M28 14l1-5q0-6-5-5-4 0-5 5l-1 4q5 3 10 1z" fill="#8a5be0" /><path d="M14 11h6l-3 10h-6z" fill="#e7eefb" /></>,
  <><circle cx="15" cy="17" r="13" fill="#2da94f" /><path d="M15 17L3.700 10.500A13 13 0 0 1 26.300 10.500z" fill="#e33e2b" /><path d="M15 17l11.300-6.500A13 13 0 0 1 15 30z" fill="#fbc116" /><circle cx="15" cy="17" r="6.500" fill="#fff" /><circle cx="15" cy="17" r="5" fill="#4285f4" /><circle cx="25" cy="6" r="8" fill="#d9c6ba" /><path d="M20 12q0-5 5-5t5 5q-5 4-10 0z" fill="#444" /><circle cx="25" cy="4.500" r="3" fill="#7a5443" /></>,
  <><path d="M3 14l7-3h12l7 3v11l-5 5H8l-5-5z" fill="#111" /><path d="M6 19l10 3 10-3M7 25h18" stroke="#35c1a8" strokeWidth="2" fill="none" /><path d="M16 3v15M9 10h14" stroke="#111" strokeWidth="7" /><path d="M16 4v13M10 10h12" stroke="#f7d417" strokeWidth="4" /></>,
  <><circle cx="16" cy="16" r="14" fill="#1179c9" /><path d="M3 12Q8 1 18 2q11 2 12 12-1 6-8 6-5 0-4-3 2-6-5-7-6 0-10 5z" fill="#3fd07a" /><path d="M3 12Q8 1 18 2q5 1 8 4-8-3-14 1-6 3-9 5z" fill="#2bb3d8" /><path d="M3 12q7-6 12 0-5 4-1 10 5 6 12 3-5 6-13 5Q1 26 3 12z" fill="#1b8ee0" /></>,
  <><path d="M8 10l11-7 11 7v15q0 3-3 3H11q-3 0-3-3z" fill="#35a5ea" /><path d="M12 7h14v12H12z" fill="#dff0fb" /><path d="M8 13l11 8 11-8v12q0 3-3 3H11z" fill="#1b7bd4" /><rect x="2" y="12" width="14" height="14" rx="2" fill="#0f5fb8" /><circle cx="9" cy="19" r="3.800" fill="none" stroke="#fff" strokeWidth="2" /></>,
  <><path d="M2 5h10l3 4h15v18H2z" fill="#e8a51c" /><path d="M2 12h28v14q0 2-2 2H4q-2 0-2-2z" fill="#fbd35c" /><path d="M8 28v-6h16v6" fill="#1c84d6" /></>,
  <path transform="translate(3 3) scale(1.1)" fill="#1f8fdf" d="M23.150 2.587L18.210.21a1.494 1.494 0 0 0-1.705.29l-9.460 8.630-4.120-3.128a.999.999 0 0 0-1.276.057L.327 7.261A1 1 0 0 0 .326 8.740L3.899 12 .326 15.260a1 1 0 0 0 .001 1.479L1.650 17.940a.999.999 0 0 0 1.276.057l4.120-3.128 9.460 8.630a1.492 1.492 0 0 0 1.704.290l4.942-2.377A1.500 1.500 0 0 0 24 20.060V3.939a1.500 1.500 0 0 0-.850-1.352zm-5.146 14.861L10.826 12l7.178-5.448v10.896z" />,
  <><rect x="2" y="2" width="28" height="28" rx="3" fill="#2e6a91" /><path d="M6 8q5-3 9 2 3 6 8 9l3 5-5-1-6-4q-6 1-6-5z" fill="none" stroke="#e8f0f6" strokeWidth="1.600" /></>,
  <><path d="M6 1h15l5 5v24H6z" fill="#f5f5f5" stroke="#c9c9c9" /><path d="M10 17q0-5 6-5 5 0 5 4v3h-5q-4 0-4 3-3-1-2-5z" fill="#3c78aa" /><path d="M23 18q5 0 4 5t-6 5q-5 0-5-3v-2h6q2-1 1-5z" fill="#f7cd45" /></>,
  <><path d="M5 11Q16-3 27 11 16 5 5 11zM5 20q11 14 22 0-11 6-22 0z" fill="#f37726" /><circle cx="26" cy="3" r="2" fill="#777" /><circle cx="6" cy="28" r="2.500" fill="#777" /><circle cx="5" cy="5" r="1.500" fill="#777" /></>,
  <><circle cx="16" cy="16" r="11.500" fill="#fff" stroke="#3eb049" strokeWidth="4" /><path d="M22 11a8 8 0 1 0 0 10" fill="none" stroke="#6cc374" strokeWidth="1.500" /></>,
  <><rect x="17" y="1" width="10" height="30" rx="2" fill="#d9930f" /><rect x="11" y="8" width="10" height="23" rx="2" fill="#eeb824" /><rect x="5" y="15" width="10" height="16" rx="2" fill="#f8d64a" /></>,
];

function Taskbar() {
  return (
    <div className="flex h-[60px] items-center bg-[#e7eefb] text-[#1b1b1b]">
      <svg width="36" height="40" viewBox="26 1031 36 40" className="ml-[24px]">
        <path d="M28 1050l19-6 8 16-22 8z" fill="#5a35b5" />
        <defs>
          <linearGradient id="news" x1="0" x2="1">
            <stop offset="0" stopColor="#4d7de8" />
            <stop offset="1" stopColor="#b35be8" />
          </linearGradient>
        </defs>
        <rect x="29" y="1044" width="26" height="18" rx="2.500" fill="url(#news)" />
        <path d="M36 1047q5 3 4 7-1 4-4 4t-4-4q0-3 2-4 1 2 2 0z" fill="#fff" />
        <path d="M43 1053h9M43 1057h7" stroke="#d9c3f7" strokeWidth="1.500" />
        <circle cx="51" cy="1041" r="10" fill="#c42b1c" />
        <T x={51} y={1041} s={13} a="middle" c="#fff">3</T>
      </svg>
      <div className="ml-[4px] w-[383px] whitespace-nowrap pt-[3px] text-[14px] leading-[20px]">
        <div>Top Stories</div>
        <div className="tracking-[0.1px] text-[#5c6068]">'Very Exciting Ti...</div>
      </div>
      <svg width="29" height="29" viewBox="0 0 29 29">
        <defs>
          <linearGradient id="win" x1="0" y1="0" x2="1" y2="1">
            <stop offset="0" stopColor="#4cc6f7" />
            <stop offset="1" stopColor="#0573d2" />
          </linearGradient>
        </defs>
        <path d="M0 0h14v14H0zM15 0h14v14H15zM0 15h14v14H0zM15 15h14v14H15z" fill="url(#win)" />
      </svg>
      <div className="ml-[17px] flex h-[39px] w-[274px] items-center rounded-full border border-[#d9dfea] bg-[#f8faff] pl-[13px] text-[16.300px] text-[#5b5b5b]">
        <svg width="20" height="20" viewBox="0 0 20 20" fill="none" stroke="#1f1f1f" strokeWidth="2">
          <circle cx="8.500" cy="8.500" r="7" />
          <path d="M13.500 13.500l5 5" />
        </svg>
        <span className="ml-[11px]">Search</span>
        <svg width="64" height="36" viewBox="0 0 64 36" className="ml-auto mr-[2px]">
          <path d="M1 26q8-5 16-2t16-1 15 1 15-2q-6 9-20 10t-26-1T1 26z" fill="#8fb8dc" />
          <path d="M5 24Q8 9 24 7q4-5 9-5 0 4-1 6 14 2 19 13 6 1 9 6-8 1-12-3-9 2-15-1-12-6-28 1z" fill="#4d6b8a" />
          <path d="M7 22q7-9 18-4 9 5 19 5-10 5-20 1-9-3-17-2z" fill="#dfe8f1" />
          <circle cx="16" cy="15" r="1" fill="#14212e" />
        </svg>
      </div>
      <div className="ml-[2px] flex">
        {taskIcons.map((ic, i) => (
          <div key={i} className={"flex h-[50px] w-[55.200px] flex-col items-center " + (i === 12 ? "" : "")}>
            <div className={i === 12 ? "flex h-[50px] w-[46px] flex-col items-center rounded-[6px] bg-[#f6f9fe]" : "flex flex-col items-center"}>
              <svg width="32" height="32" viewBox="0 0 32 32" className="mt-[9px]">
                {ic}
              </svg>
              {[2, 4, 6, 10].includes(i) && <div className="mt-[5px] h-[3px] w-[7px] rounded-full bg-[#868b93]" />}
              {i === 12 && <div className="mt-[5px] h-[4px] w-[20px] rounded-full bg-[#6b7d8a]" />}
            </div>
          </div>
        ))}
      </div>
      <svg width="14" height="9" viewBox="0 0 14 9" fill="none" stroke="#1b1b1b" strokeWidth="1.700" className="ml-auto">
        <path d="M1 8l6-6 6 6" />
      </svg>
      <div className="ml-[18px] w-[44px] text-center text-[14px] leading-[20px]">
        ENG
        <br />
        INTL
      </div>
      <svg width="86" height="22" viewBox="0 0 86 22" fill="none" stroke="#1b1b1b" strokeWidth="1.500" className="ml-[15px]">
        <path d="M2 9q9-8.500 18 0M5 12q6-6 12 0M8 15q3-3 6 0" />
        <circle cx="11" cy="17.500" r="1.200" fill="#1b1b1b" />
        <path d="M32 8h3l5-4v14l-5-4h-3zM43 8q2 3 0 6M46 6q4 5 0 10M49 4q5 7 0 14" />
        <rect x="64" y="6" width="14" height="11" rx="2" fill="#1b1b1b" />
        <path d="M80 9v5M64 3l-3 6h5l-3 6" />
      </svg>
      <div className="ml-[2px] w-[92px] whitespace-nowrap text-right text-[14px] leading-[20px] tracking-[0.1px]">
        09:52 AM
        <br />
        23-07-2025
      </div>
      <svg width="18" height="20" viewBox="0 0 18 20" className="ml-[11px] mr-[25px]">
        <path d="M2 14V8q0-6 6-6l2 5 5 1v6l1 1v1H1v-1zM6 17h5q-2 3-5 0z" fill="#1b1b1b" />
        <path d="M12 1h4l-4 5h4" stroke="#1b1b1b" strokeWidth="1.200" fill="none" />
        <path d="M6 8h4l-4 4h4" stroke="#fff" strokeWidth="1" fill="none" />
      </svg>
    </div>
  );
}

export default function App() {
  return (
    <div className={`${UI} h-[1084px] w-[1924px] overflow-hidden border-2 border-[#ff0000] bg-[#141414]`}>
      <TitleBar />
      <Menu />
      <Ribbon />
      <div className="flex h-[777px]">
        <LeftNav />
        <div className="w-[1417px]">
          <div className="flex h-[732px]">
            <div className="w-[36px] bg-linear-to-r from-[#4c4796] from-60% to-[#64609f]" />
            <Report />
            <div className="w-[36px] bg-linear-to-b from-[#8d55bd] to-[#9e58cb]" />
            <FiltersRail />
          </div>
          <PageTabs />
        </div>
        <VizPane />
        <DataPane />
      </div>
      <StatusBar />
      <Taskbar />
    </div>
  );
}
